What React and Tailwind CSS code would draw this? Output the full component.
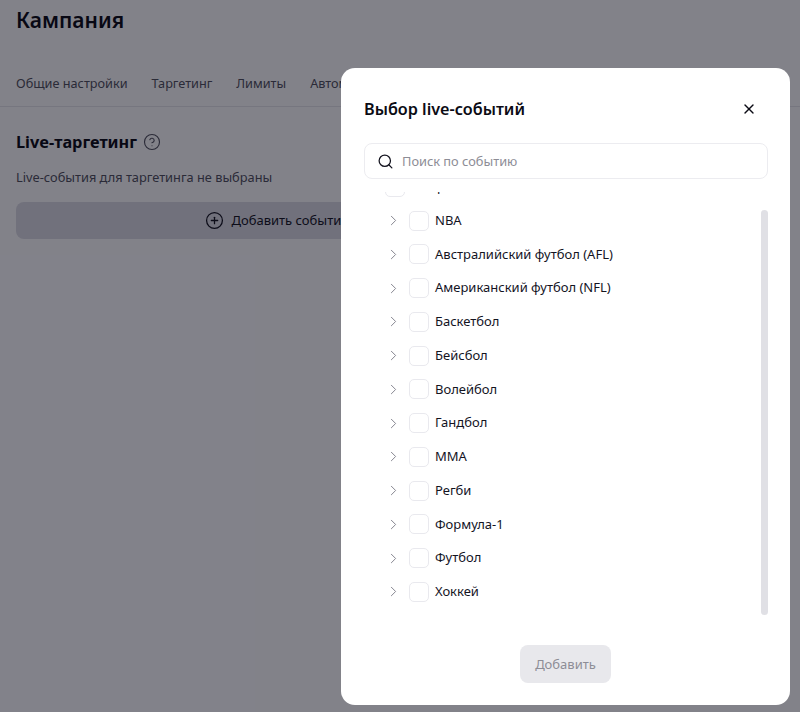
import React from "react";
import { ChevronRight, Search, X, CirclePlus, CircleHelp } from "lucide-react";

const rows = ["NBA","Австралийский футбол (AFL)","Американский футбол (NFL)","Баскетбол","Бейсбол","Волейбол","Гандбол","MMA","Регби","Формула-1","Футбол","Хоккей"];

function Row({ label }) {
  return (
    <div className="flex h-[33.75px] items-center">
      <ChevronRight size={17} strokeWidth={1.4} className="ml-[44px] text-[#85858f]" />
      <span className="ml-[7px] size-[20px] rounded-[5px] border border-[#e9e9ee] bg-white" />
      <span className="ml-[6px] text-[13px] text-[#14141f]">{label}</span>
    </div>
  );
}

export default function App() {
  return (
    <div className="relative h-[712px] w-[800px] overflow-hidden bg-white font-['Noto_Sans',sans-serif]">
      <div className="px-4">
        <h1 className="pt-[3px] text-[21px] font-semibold leading-[34px] text-[#0b0b14]">Кампания</h1>
        <div className="-mx-4 mt-[33px] flex h-[37px] gap-6 border-b border-[#e6e6ea] px-4 pt-[3px] text-[12.7px] leading-[20px] text-[#50505c]">
          <span>Общие настройки</span>
          <span>Таргетинг</span>
          <span>Лимиты</span>
          <span>Автоматизация</span>
        </div>
        <div className="mt-[21px] flex items-center gap-[6px]">
          <h2 className="text-[16.3px] font-bold leading-[28px] text-[#0b0b14]">Live-таргетинг</h2>
          <CircleHelp size={18} strokeWidth={1.5} className="text-[#50505c]" />
        </div>
        <p className="mt-[11px] text-[12.8px] leading-[20px] text-[#50505c]">Live-события для таргетинга не выбраны</p>
        <button className="mt-[15px] flex h-[37px] w-[522px] items-center justify-center gap-[7px] rounded-lg bg-[#dcdce4] text-[13px] text-[#14141f]">
          <CirclePlus size={19} strokeWidth={1.6} />
          Добавить событие
        </button>
      </div>

      <div className="absolute inset-0 bg-[#050514]/50" />

      <div className="absolute left-[341px] top-[68px] flex h-[637px] w-[449px] flex-col rounded-[14px] bg-white">
        <div className="flex h-[75px] shrink-0 items-center justify-between pl-[23px] pr-[33px] pt-[7px]">
          <h3 className="text-[16.2px] font-semibold text-[#0b0b14]">Выбор live-событий</h3>
          <X size={16} strokeWidth={2} className="text-[#0b0b14]" />
        </div>
        <div className="ml-[23px] flex h-[36px] w-[404px] shrink-0 items-center gap-[8px] rounded-lg border border-[#ececf0] px-[12px]">
          <Search size={17} strokeWidth={1.8} className="text-[#14141f]" />
          <span className="pt-[1px] text-[12.8px] text-[#8d8d96]">Поиск по событию</span>
        </div>
        <div className="relative h-[436px] shrink-0 overflow-hidden">
          <div className="absolute inset-x-0 top-0 z-10 h-[13px] bg-white" />
          <div className="-mt-[9px]">
            <div className="flex h-[33.75px] items-center pl-[44px]">
              <span className="size-[20px] rounded-[5px] border border-[#e9e9ee]" />
              <span className="ml-[6px] text-[13px] text-[#14141f]">Выбрать все</span>
            </div>
            {rows.map((r) => <Row key={r} label={r} />)}
          </div>
          <div className="absolute left-[420px] top-[31px] h-[405px] w-[7px] rounded-full bg-[#e0e0e5]" />
        </div>
        <div className="flex justify-center pt-[30px]">
          <button className="h-[38px] w-[91px] rounded-lg bg-[#e8e8ec] pt-[1px] text-[13px] text-[#8d8d96]">Добавить</button>
        </div>
      </div>
    </div>
  );
}
